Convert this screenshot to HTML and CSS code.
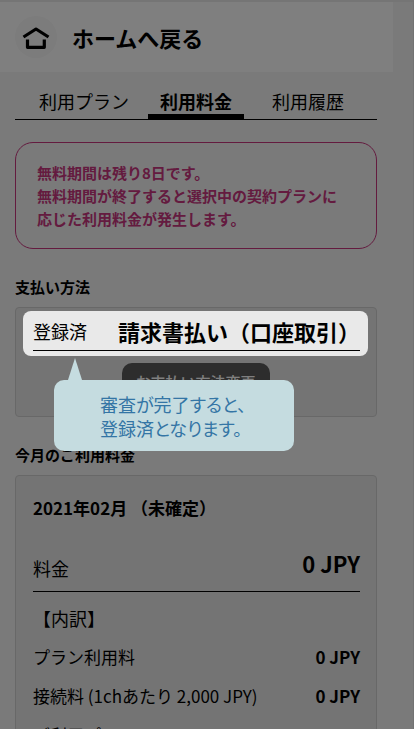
FILE: index.html
```
<!DOCTYPE html>
<html lang="ja">
<head>
  <meta charset="UTF-8">
  <meta name="viewport" content="width=device-width, initial-scale=1">
  <title>利用料金</title>
  <link rel="stylesheet" href="styles.css">
</head>
<body>
  <div class="page">
    <header class="header">
      <a class="home-link" href="#">
        <span class="home-icon">
          <svg width="28" height="24" viewBox="0 0 28 24" fill="none" stroke="#000" stroke-width="3.2">
            <path d="M1.5 12 L14 4 L26.5 12" stroke-linejoin="round"/>
            <path d="M5.5 14.5 V22.3 H22.3 V14.5" stroke-linejoin="round"/>
          </svg>
        </span>
        ホームへ戻る
      </a>
    </header>

    <main class="content">
      <!-- タブ -->
      <nav class="tabs">
        <a class="tab" href="#">利用プラン</a>
        <a class="tab active" href="#">利用料金</a>
        <a class="tab" href="#">利用履歴</a>
      </nav>

      <p class="notice">無料期間は残り8日です。<br>無料期間が終了すると選択中の契約プランに<br>応じた利用料金が発生します。</p>

      <!-- 支払い方法 -->
      <h2 class="section-title">支払い方法</h2>
      <section class="card payment">
        <div class="spotlight">
          <div class="row method">
            <span>登録済</span>
            <strong class="large">請求書払い（口座取引）</strong>
          </div>
          <div class="tooltip">審査が完了すると、<br>登録済となります。</div>
        </div>
        <button class="change" type="button">お支払い方法変更</button>
      </section>

      <!-- 今月のご利用料金 -->
      <h2 class="section-title">今月のご利用料金</h2>
      <section class="card charges">
        <h3 class="month">2021年02月 （未確定）</h3>
        <div class="row total">
          <span>料金</span>
          <strong class="large">0 JPY</strong>
        </div>
        <p class="breakdown">【内訳】</p>
        <div class="row item"><span>プラン利用料</span><strong>0 JPY</strong></div>
        <div class="row item"><span>接続料 (1chあたり 2,000 JPY)</span><strong>0 JPY</strong></div>
        <div class="row item"><span>ご利用プラン</span><strong>0 JPY</strong></div>
      </section>
    </main>
  </div>
  <div class="overlay"></div>
</body>
</html>
```
FILE: styles.css
```
* {
  box-sizing: border-box;
}
body {
  margin: 0;
  background: #f4f4f4;
  color: #000;
  font-family: "Noto Sans CJK JP", sans-serif;
  font-size: 18px;
  line-height: 24px;
}
a {
  color: inherit;
  text-decoration: none;
}
h2, h3, p {
  margin: 0;
}
strong {
  font-weight: 700;
}
.page {
  height: 100vh;
  overflow: hidden;
  padding-right: 20px;
  border-top: 2px solid #ebebeb;
  border-right: 1px solid #e4e4e4;
}
.overlay {
  position: fixed;
  inset: 0;
  z-index: 1;
  background: rgba(0, 0, 0, 0.5);
}

/* ヘッダー */
.header {
  padding: 14px 15px;
  background: #fff;
}
.home-link {
  display: flex;
  align-items: center;
  gap: 15px;
  font-size: 22px;
  font-weight: 700;
}
.home-icon {
  display: flex;
  align-items: center;
  justify-content: center;
  width: 42px;
  height: 42px;
  border-radius: 50%;
  background: #f8f8f8;
}

.content {
  padding: 0 16px 0 15px;
}

/* タブ */
.tabs {
  display: flex;
  justify-content: center;
  gap: 16px;
  margin-top: 17px;
  border-bottom: 1px solid #000;
}
.tab {
  width: 96px;
  padding-bottom: 1px;
  border-bottom: 5px solid transparent;
  text-align: center;
}
.tab.active {
  border-color: #000;
  font-weight: 700;
}

.notice {
  margin-top: 22px;
  padding: 18px 21px;
  border: 1px solid #c9367f;
  border-radius: 18px;
  color: #c9367f;
  font-size: 15px;
  font-weight: 700;
  line-height: 23px;
}

.section-title {
  margin-top: 26px;
  font-size: 15px;
  font-weight: 700;
}
.card {
  margin-top: 8px;
  padding: 0 16px 0 17px;
  border: 1px solid #d0d0d0;
  border-radius: 4px;
  background: #e8e8e8;
}
.row {
  display: flex;
  justify-content: space-between;
}
.large {
  font-size: 22px;
}

/* 支払い方法 */
.payment {
  height: 110px;
  padding: 3px 8px 3px 7px;
  text-align: center;
}
.spotlight {
  position: relative;
  z-index: 2;
  height: 45px;
  padding: 0 8px 0 10px;
  border-radius: 8px;
  background: #e9e9e9;
}
.method {
  padding: 8px 0 7px;
  border-bottom: 1px solid #000;
}
.change {
  width: 148px;
  height: 36px;
  margin-top: 7px;
  border: 0;
  border-radius: 10px;
  background: #5a5a5a;
  color: #fff;
  font-family: inherit;
  font-size: 15px;
  font-weight: 500;
}
.tooltip {
  position: absolute;
  top: 69px;
  left: 31px;
  width: 240px;
  padding: 12px 46px 11px;
  border-radius: 10px;
  background: #c5dce0;
  color: #3475a5;
  font-size: 18px;
  font-weight: 400;
  font-feature-settings: "palt";
  text-align: left;
  white-space: nowrap;
}
.tooltip::before {
  content: "";
  position: absolute;
  bottom: 100%;
  left: 14px;
  border: 7px solid transparent;
  border-top: 0;
  border-bottom: 22px solid #c5dce0;
}

/* ご利用料金 */
.month {
  padding-top: 20px;
  font-size: 17px;
  font-weight: 700;
}
.total {
  align-items: flex-end;
  margin-top: 31px;
  padding-bottom: 11px;
  border-bottom: 1px solid #000;
}
.total .large {
  padding-bottom: 5px;
}
.breakdown {
  margin-top: 14px;
}
.item {
  margin-top: 15px;
  font-size: 17px;
}
```
